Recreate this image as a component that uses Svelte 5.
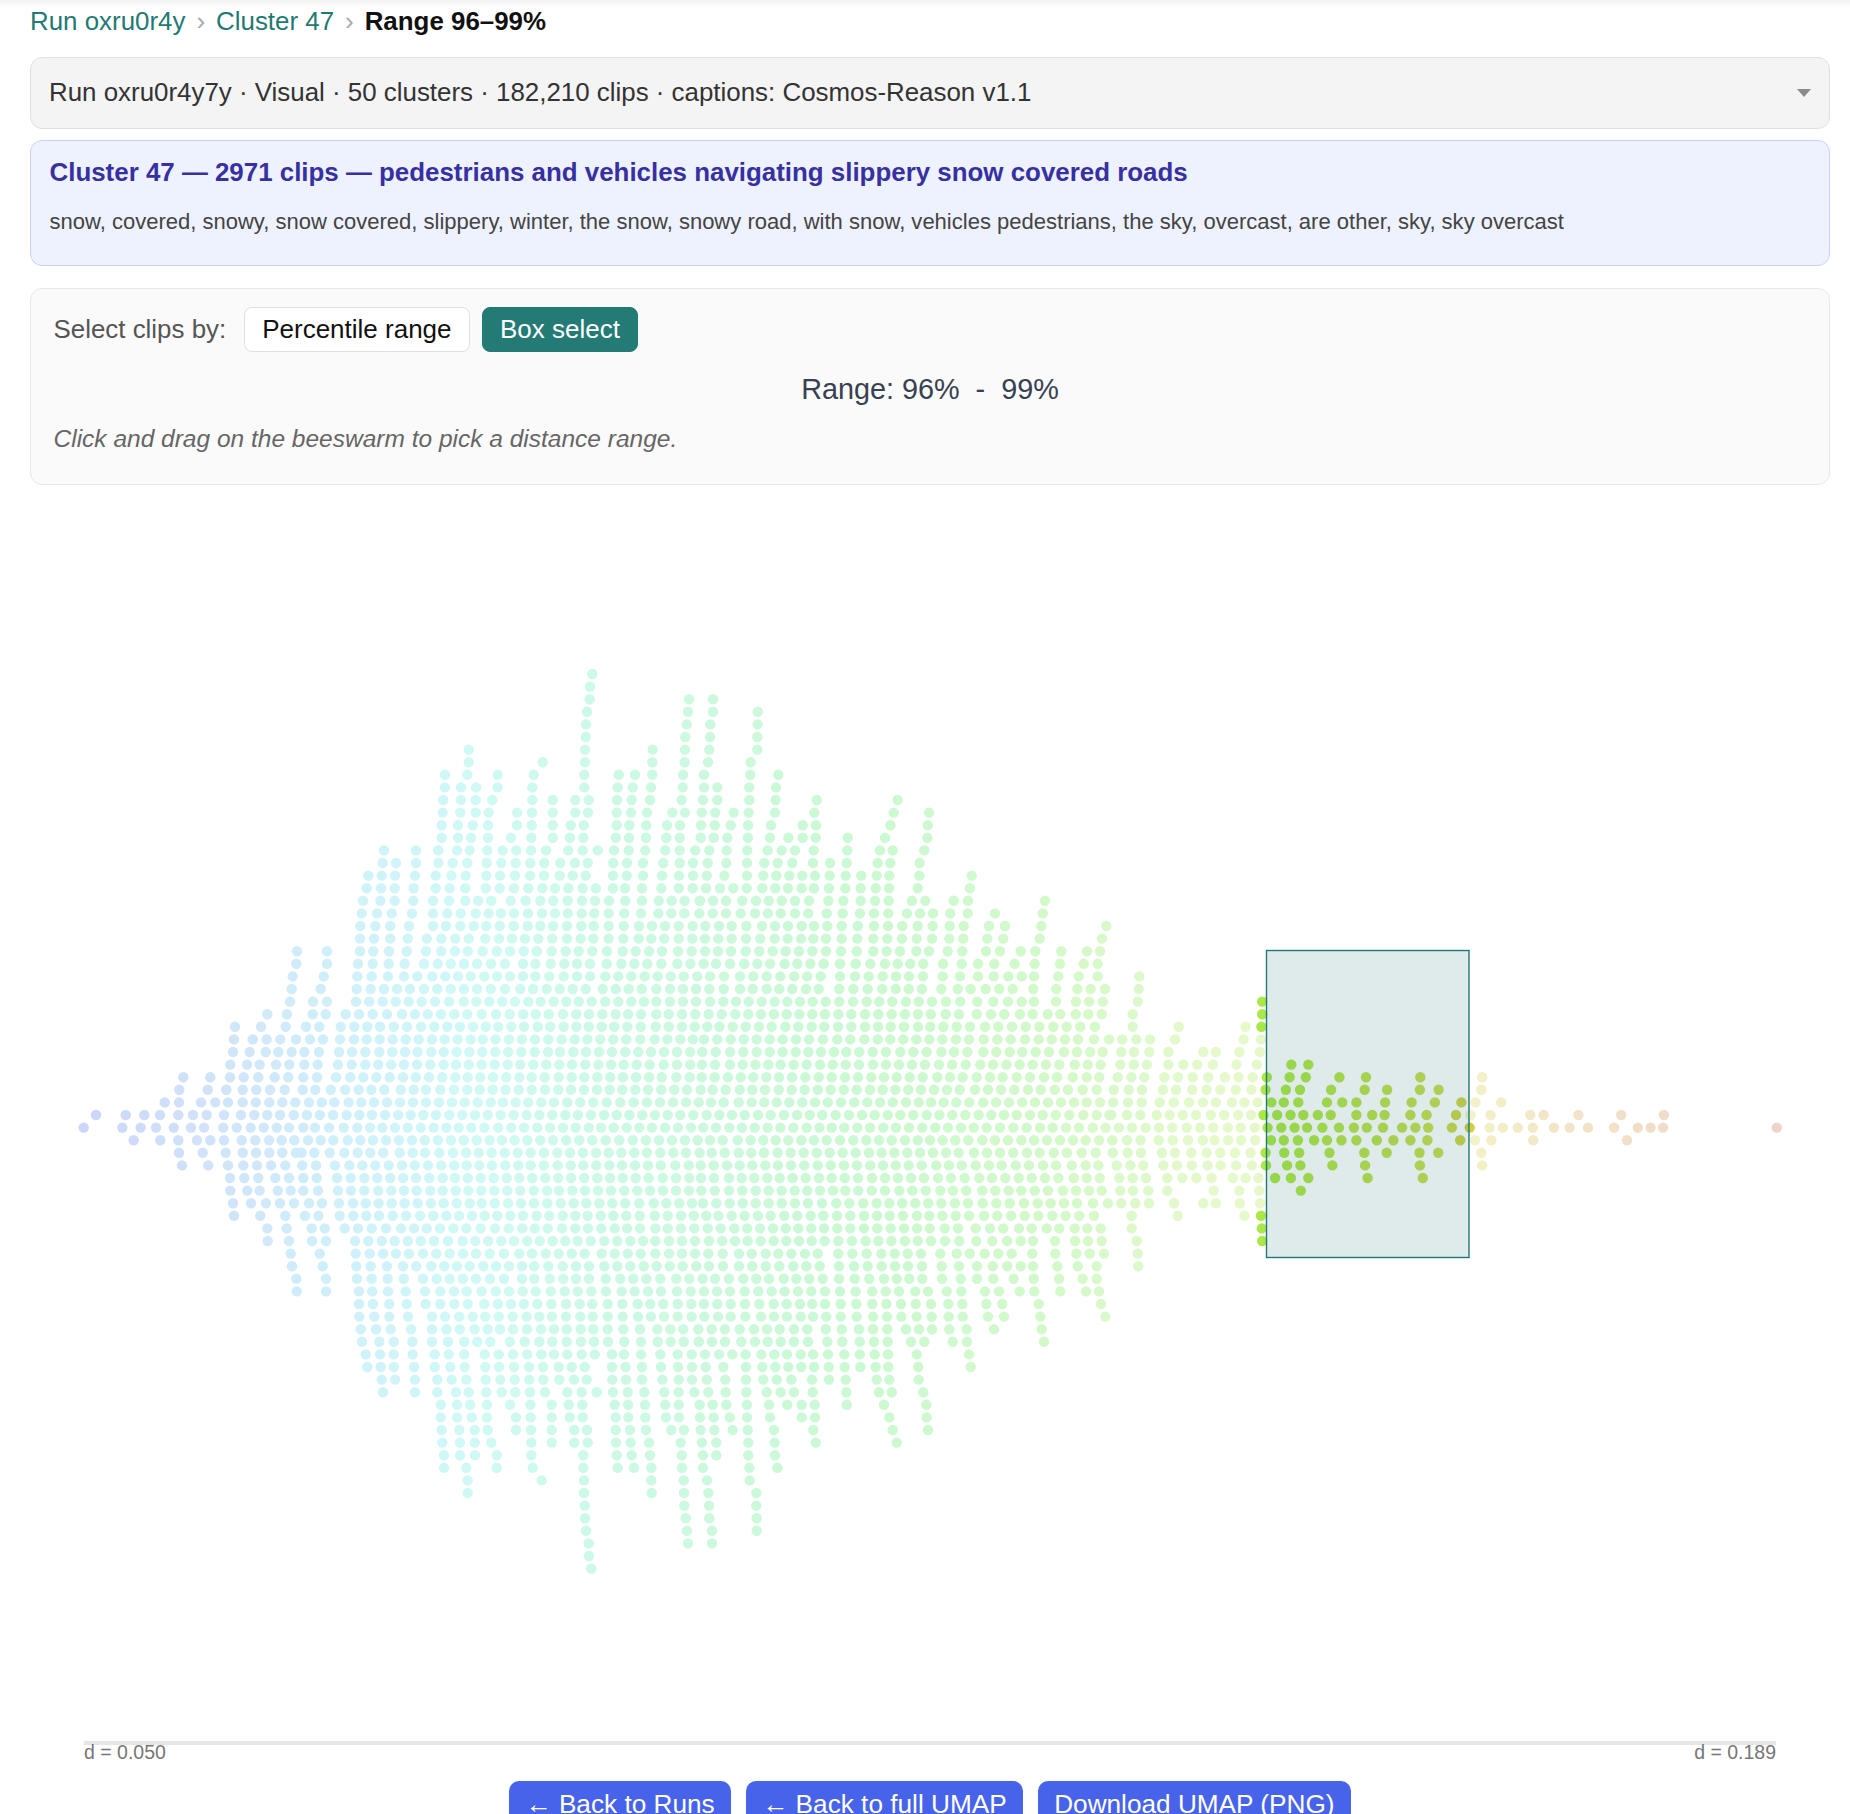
<script>
  // Dot positions are read per row (r = rows above the centre line).
  const leftTop = {
    14:[711],13:[709],12:[698],11:[695],10:[690],9:[622,681],8:[525,603,677],
    7:[522,578,620,661,708],6:[519,569,617,655,695],5:[511,561,599,648,688],
    4:[370,451,510,551,595,644,685],3:[358,443,499,548,589,630,674],
    2:[314,357,423,466,504,548,587,628,667,706],
    1:[108,197,253,300,355,399,440,492,543,583,622,660,701],
    0:[71,187,242,288,341,393,432,490,530,572,611,650,687]
  };
  const leftBottom = {
    1:[221,301,355,411,451,492,545,586,627,665,703],2:[357,428,497,548,588,628,667,708],
    3:[366,445,504,550,591,633,676],4:[510,553,595,646,687],5:[511,562,599,653,692],
    6:[519,573,618,660,702],7:[522,601,676],8:[622,680],9:[623,687],10:[692],11:[696],12:[709],13:[710]
  };
  const a = {
    36:[877],35:[870],34:[869,1167],33:[861,1164],32:[858,1160],31:[857,1156],
    30:[506,855,1058,1155],29:[506,728,855,1057,1154],
    28:[435,502,593,701,853,956,1005,1057,1149],
    27:[435,483,528,593,697,853,953,998,1053,1148],
    26:[430,483,527,577,697,758,826,866,951,995,1050,1145],
    25:[428,481,527,566,651,696,758,826,864,950,993,1041,1117,1155],
    24:[425,474,518,564,651,695,758,812,851,950,988,1039,1101,1140],
    23:[425,474,513,564,633,694,758,809,850,947,987,1038,1099,1139],
    22:[252,348,415,471,509,562,608,649,693,738,805,848,893,942,986,1036,1096,1139,1186],
    21:[248,288,348,415,458,502,560,604,647,691,733,781,825,863,940,981,1029,1090,1139,1179],
    20:[205,245,285,345,407,454,497,559,600,645,690,732,779,818,857,939,980,1029,1086,1137,1179],
    19:[200,243,284,341,407,449,496,557,599,642,685,727,765,805,848,887,939,975,1026,1084,1136,1178],
    18:[189,241,284,340,399,447,496,535,574,632,677,721,760,803,846,885,927,976,1026,1076,1115,1154,1199],
    17:[185,231,275,336,399,442,482,527,566,603,642,684,726,765,803,845,883,926,973,1023,1075,1114,1153,1198],
    16:[181,226,271,327,399,438,481,521,559,599,641,683,721,759,801,844,881,926,971,1017,1056,1095,1136,1178],
    15:[180,222,271,323,380,424,466,506,556,597,636,675,715,757,801,842,880,926,970,1016,1054,1093,1136,1177],
    14:[81,180,220,267,320,378,424,465,503,548,590,630,671,710,755,797,836,877,921,968,1007,1047,1086,1134,1175],
    13:[81,174,218,266,314,372,413,452,492,531,573,615,669,706,752,793,831,870,920,964,1003,1042,1084,1132,1171],
    12:[71,172,215,264,312,352,397,436,474,512,553,591,630,669,706,748,791,831,870,916,955,994,1034,1073,1112,1151,1192],
    11:[62,170,212,252,291,330,372,412,452,492,531,572,615,661,699,740,779,818,857,908,947,986,1025,1069,1110,1149,1188],
    10:[39,81,168,208,248,287,326,365,405,447,491,529,568,607,645,685,722,761,799,836,875,916,955,994,1032,1069,1110,1149,1188],
    9:[38,77,137,177,218,261,306,345,383,423,463,502,545,588,629,670,707,746,789,829,867,907,947,984,1023,1069,1106,1146,1186],
    8:[18,58,122,163,202,240,281,321,363,403,442,480,519,557,595,634,672,713,751,791,829,866,905,943,982,1022,1067,1106,1146,1184],
    7:[30,69,120,162,200,239,278,317,356,396,434,473,512,548,587,627,666,705,745,785,824,862,901,940,979,1021,1064,1102,1141,1179],
    6:[13,57,117,156,196,238,277,315,353,394,431,470,508,547,586,625,664,704,744,780,820,858,897,936,976,1015,1053,1092,1131,1170],
    5:[13,53,114,155,196,235,274,312,351,391,431,468,506,545,584,623,661,700,739,778,816,856,895,933,971,1010,1049,1091,1131,1171],
    4:[10,51,108,151,190,229,269,309,347,387,427,466,503,541,579,619,658,695,734,776,815,853,892,931,969,1008,1047,1085,1129,1169],
    3:[8,46,92,136,176,214,253,302,341,378,421,462,502,539,578,617,656,695,735,775,813,852,891,929,967,1006,1044,1084,1123,1161],
    2:[27,65,103,146,184,222,261,300,339,378,417,456,494,533,572,609,647,685,724,762,802,841,880,920,961,1001,1041,1080,1119,1158,1196],
    1:[21,59,99,140,178,216,255,295,332,370,408,448,487,525,563,602,641,680,718,757,796,834,873,912,950,988,1027,1065,1103,1141,1180],
    0:[10,45,87,131,172,210,247,285,323,362,401,439,476,514,553,595,634,672,712,750,789,827,866,903,941,980,1018,1056,1095,1134,1173]
  };
  const b = {
    34:[39],33:[39,173],32:[31,173],31:[30,172],30:[28,172],29:[24,152],28:[12,151,235],
    27:[12,52,148,228],26:[9,52,148,227,350,593],25:[5,46,101,146,225,343,581,687],
    24:[3,44,92,144,213,308,348,571,683],23:[2,41,82,144,210,265,308,347,443,555,682],
    22:[28,80,142,203,245,285,341,442,540,578,673],
    21:[23,79,141,193,233,277,339,390,440,533,571,659],
    20:[20,73,141,190,229,268,307,345,389,437,484,530,568,658,815],
    19:[18,60,100,140,187,226,264,305,342,387,436,482,527,567,653,810],
    18:[0,39,78,127,168,206,245,285,327,385,430,482,525,566,636,676,761,804,1035],
    17:[38,78,122,165,204,242,285,325,380,428,480,522,565,621,660,699,751,803,885,1028],
    16:[16,57,95,139,186,225,264,305,342,382,425,473,522,564,607,653,698,749,791,867,915,1024,1219],
    15:[15,55,95,138,181,224,263,303,340,378,425,472,520,562,606,650,696,748,790,862,910,1019,1206],
    14:[15,54,93,137,178,218,257,297,337,378,423,470,520,560,600,649,687,743,787,858,900,962,1006,1084,1161,1200],
    13:[11,48,90,133,172,210,254,292,331,371,420,467,511,555,593,631,670,729,785,834,883,944,1004,1080,1151,1193],
    12:[30,72,120,160,200,241,283,322,362,420,465,506,548,588,627,669,728,780,834,881,925,965,1002,1075,1136,1193],
    11:[28,71,120,158,200,238,277,318,356,418,460,503,547,587,626,666,724,773,812,857,898,938,1000,1069,1132,1172,1215],
    10:[30,70,108,146,185,224,262,300,338,377,418,459,500,538,577,618,656,696,738,781,832,880,924,965,1002,1068,1128,1167,1208],
    9:[26,65,106,145,183,222,260,298,337,375,415,454,495,535,575,615,654,692,737,777,830,873,913,960,998,1043,1081,1127,1165,1205],
    8:[22,58,98,137,177,215,256,295,335,373,414,454,495,534,572,612,654,691,730,770,810,855,895,936,977,1018,1060,1100,1141,1185],
    7:[12,52,92,131,170,209,248,288,327,369,412,451,493,533,571,610,649,688,727,768,807,851,892,932,975,1016,1055,1095,1134,1182,1227],
    6:[7,47,90,130,170,209,248,287,325,363,402,439,478,518,558,601,640,680,724,762,802,850,889,929,967,1007,1047,1092,1131,1170,1208],
    5:[6,45,90,128,166,205,242,281,320,360,398,437,477,519,558,597,636,675,717,756,797,841,879,919,959,998,1038,1078,1124,1163,1202],
    4:[5,44,84,122,160,199,237,276,316,356,395,435,474,514,552,590,629,668,712,750,788,830,870,908,950,990,1032,1071,1118,1160,1198],
    3:[2,38,77,119,157,195,236,275,314,353,392,431,470,510,548,586,625,663,702,741,779,825,864,903,943,984,1022,1064,1104,1148,1190],
    2:[33,71,116,155,193,230,268,307,345,383,423,463,502,540,578,618,656,693,731,769,808,850,888,927,967,1005,1044,1083,1122,1160,1200],
    1:[20,58,96,134,174,212,252,291,329,367,407,447,486,524,563,601,640,680,718,757,796,836,874,912,950,990,1028,1067,1108,1150,1190,1228],
    0:[10,48,88,126,164,203,241,280,320,358,395,433,472,510,550,588,627,667,706,744,783,821,860,900,940,980,1020,1058,1098,1137,1178,1217]
  };
  const c = {
    12:[418],11:[416],10:[413],9:[398],8:[398,536],7:[367,409,450,525],6:[364,402,448,505],
    5:[361,401,441,505,550,592],4:[353,394,433,493,534,578],3:[341,386,426,489,528,577],
    2:[340,384,425,479,521,567],1:[334,381,421,470,509,548,588],0:[357,396,437,477,517,560,600]
  };
  const tailPlain = {
    8:[110],7:[105,147],6:[8,38,95,144],5:[31,88,137],4:[20,60,93,127,680],3:[16,49,86,124,678],
    2:[7,38,77,107,139,664,726],1:[26,58,92,123,652,700,796,828,912,1015,1118],
    0:[32,67,98,132,698,730,766,802,853,891,935,998,1055,1086,1116,1390],
    '-1':[7,35,68,99,133,663,702,803,1029],'-2':[16,49,84,122,678],'-3':[18,50,87,125,680],
    '-4':[28,79,110,141],'-5':[33,95,143],'-6':[8,38,96,145],'-7':[107]
  };
  const tailSel = {
    10:[150],9:[150],8:[148],5:[220,261],4:[161,216,255,336,400,531],3:[158,207,241,316,397,451,530,575],
    2:[172,202,237,306,343,377,446,510,566,630],1:[153,186,218,249,284,315,377,415,445,507,546,617],
    0:[163,196,228,258,295,335,371,402,441,487,519,550,607,650],
    '-1':[171,202,236,275,306,341,377,426,466,507,548,627],'-2':[158,203,239,312,396,450,529,574],
    '-3':[159,210,242,319,398,530],'-4':[181,219,261,404,537],'-5':[243],'-7':[147],'-8':[149],'-9':[150]
  };

  const CY = 1127.6, ROW = 12.6;
  const stops = [
    [84,[203,214,250]],[200,[209,226,249]],[340,[208,240,250]],[470,[208,249,246]],[620,[204,249,228]],
    [850,[203,249,211]],[1050,[211,249,202]],[1200,[228,249,203]],[1300,[232,248,202]],[1440,[240,245,205]],[1480,[243,240,200]],
    [1560,[243,228,200]],[1780,[238,211,203]]
  ];
  function plainColor(x) {
    let i = 0;
    while (i < stops.length - 2 && x > stops[i + 1][0]) i++;
    const [x0, c0] = stops[i], [x1, c1] = stops[i + 1];
    const t = Math.max(0, Math.min(1, (x - x0) / (x1 - x0)));
    return c0.map((v, k) => v + (c1[k] - v) * t);
  }
  const rgb = (v) => `rgb(${v.map((n) => Math.round(n)).join(',')})`;
  const dots = [];
  function add(x, r, sel) {
    const p = plainColor(x);
    const col = sel ? p.map((n) => Math.max(0, 255 - (255 - n) * 3.5)) : p;
    dots.push({ x: +x.toFixed(1), y: +(CY - r * ROW).toFixed(1), fill: rgb(col) });
  }
  for (let r = 36; r >= 0; r--) {
    const xs = [
      ...(leftTop[r] || []).filter((v) => v < 720).map((v) => v / 3 + 60),
      ...(a[r] || []).filter((v) => v < 1200).map((v) => v / 3 + 300),
      ...(b[r] || []).filter((v) => v < 1260).map((v) => v / 3 + 700),
      ...(c[r] || []).map((v) => v / 3 + 1000)
    ];
    xs.forEach((x) => add(x, r, false));
    if (r >= 2) xs.filter((x) => x >= 300).forEach((x) => add(x - 1, -(r - 1), false));
  }
  for (const k in leftBottom) leftBottom[k].filter((v) => v < 720).forEach((v) => add(v / 3 + 60, -k, false));
  for (const k in tailPlain) tailPlain[k].forEach((v) => add(v / 2.41 + 1200, +k, false));
  for (const k in tailSel) tailSel[k].forEach((v) => add(v / 2.41 + 1200, +k, true));
</script>

<div class="page">
  <nav class="crumbs">
    <a href="#run">Run oxru0r4y</a><span class="sep">›</span><a href="#cluster">Cluster 47</a><span class="sep">›</span><strong>Range 96–99%</strong>
  </nav>

  <div class="select">
    <span>Run oxru0r4y7y · Visual · 50 clusters · 182,210 clips · captions: Cosmos-Reason v1.1</span>
    <i class="caret"></i>
  </div>

  <section class="info">
    <h2>Cluster 47 — 2971 clips — pedestrians and vehicles navigating slippery snow covered roads</h2>
    <p>snow, covered, snowy, snow covered, slippery, winter, the snow, snowy road, with snow, vehicles pedestrians, the sky, overcast, are other, sky, sky overcast</p>
  </section>

  <section class="panel">
    <div class="modes">
      <span class="label">Select clips by:</span>
      <button class="mode">Percentile range</button>
      <button class="mode active">Box select</button>
    </div>
    <div class="range">Range: 96%&nbsp; - &nbsp;99%</div>
    <em class="hint">Click and drag on the beeswarm to pick a distance range.</em>
  </section>

  <svg class="swarm" viewBox="30 485 1800 1256" role="img" aria-label="Beeswarm of distances">
    <g class="dots">
      {#each dots as d}
        <circle cx={d.x} cy={d.y} r="5.2" fill={d.fill} />
      {/each}
    </g>
    <rect class="box" x="1266.5" y="950.5" width="202.5" height="307" />
  </svg>

  <div class="axis">
    <span>d = 0.050</span>
    <span>d = 0.189</span>
  </div>

  <div class="actions">
    <button class="primary">← Back to Runs</button>
    <button class="primary">← Back to full UMAP</button>
    <button class="primary">Download UMAP (PNG)</button>
  </div>
</div>

<style>
  :global(body) {
    margin: 0;
    background: #fff;
  }
  .page {
    box-sizing: border-box;
    height: 1814px;
    overflow: hidden;
    padding: 0 20px 0 30px;
    font-family: "Liberation Sans", Arial, sans-serif;
    background: linear-gradient(#f3f3f3, #fff 8px) no-repeat;
    color: #111;
  }
  .crumbs {
    display: flex;
    align-items: center;
    height: 22px;
    padding-top: 10px;
    font-size: 25.9px;
    line-height: 22px;
  }
  .crumbs a {
    color: #1f7a73;
    text-decoration: none;
  }
  .crumbs .sep {
    margin: 0 11px;
    color: #aaa;
  }
  .crumbs strong {
    color: #111;
  }
  .select {
    box-sizing: border-box;
    display: flex;
    align-items: center;
    justify-content: space-between;
    height: 72px;
    margin-top: 25px;
    padding: 0 19px 2px 18px;
    background: #f4f4f4;
    border: 1.5px solid #e0e0e0;
    border-radius: 12px;
    font-size: 25.9px;
    color: #333;
  }
  .caret {
    width: 0;
    height: 0;
    margin: 2px -1px 0 0;
    border-left: 7px solid transparent;
    border-right: 7px solid transparent;
    border-top: 8px solid #8a8a8a;
  }
  .info {
    box-sizing: border-box;
    height: 126px;
    margin-top: 11px;
    padding: 16px 18.5px;
    background: #eef2ff;
    border: 1.5px solid #c7d2fe;
    border-radius: 12px;
  }
  .info h2 {
    margin: 0;
    font-size: 25.9px;
    line-height: 30px;
    font-weight: 700;
    color: #3730a3;
  }
  .info p {
    margin: 20px 0 0;
    font-size: 22.03px;
    line-height: 30px;
    color: #444;
  }
  .panel {
    box-sizing: border-box;
    height: 197px;
    margin-top: 22px;
    padding: 18px 22.5px;
    background: #fafafa;
    border: 1.5px solid #e8e8e8;
    border-radius: 12px;
  }
  .modes {
    display: flex;
    align-items: center;
    gap: 11.5px;
  }
  .label {
    margin-right: 6px;
    font-size: 25.9px;
    color: #555;
  }
  button {
    font-family: inherit;
  }
  .mode {
    height: 45px;
    padding: 0 17.5px;
    font-size: 26px;
    background: #fff;
    color: #111;
    border: 1.5px solid #e0e0e0;
    border-radius: 8px;
  }
  .mode.active {
    background: #247b75;
    border-color: #247b75;
    color: #fff;
  }
  .range {
    margin-top: 19px;
    text-align: center;
    font-size: 28.8px;
    line-height: 36px;
    color: #374151;
  }
  .hint {
    display: block;
    margin-top: 17px;
    font-size: 24.5px;
    line-height: 30px;
    color: #666;
  }
  .swarm {
    display: block;
    width: 1800px;
    height: 1256px;
  }
  .dots {
    filter: blur(0.45px);
  }
  .box {
    fill: rgba(31, 122, 115, 0.15);
    stroke: #1f7a73;
    stroke-width: 1.4;
  }
  .axis {
    display: flex;
    justify-content: space-between;
    margin: 0 54px;
    border-top: 4px solid #e6e6e6;
    font-size: 19.5px;
    line-height: 15px;
    color: #777;
  }
  .actions {
    display: flex;
    justify-content: center;
    gap: 14.5px;
    margin-top: 21px;
  }
  .primary {
    height: 33px;
    padding: 12px 16.5px 0;
    background: #4763ea;
    border: 0;
    border-radius: 10px 10px 0 0;
    color: #fff;
    font-size: 26.2px;
    line-height: 20px;
    white-space: nowrap;
  }
</style>
